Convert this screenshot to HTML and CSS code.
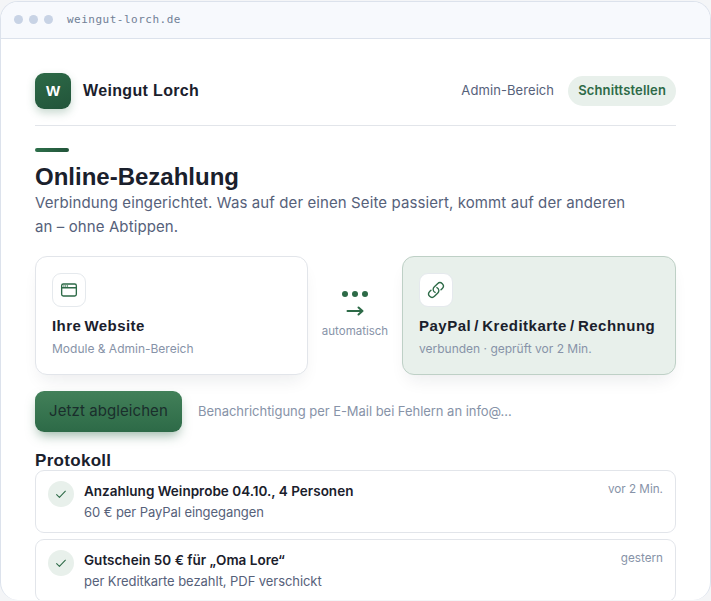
FILE: index.html
```html
<!DOCTYPE html>
<html lang="de">
<head>
<meta charset="utf-8">
<title>Weingut Lorch – Schnittstellen</title>
<link rel="stylesheet" href="styles.css">
</head>
<body>
<div class="window">
  <div class="chrome"><i></i><i></i><i></i><span class="url">weingut-lorch.de</span></div>
  <main class="page">
    <header class="top">
      <span class="mark">W</span>
      <span class="brand">Weingut Lorch</span>
      <nav class="nav"><span>Admin-Bereich</span><span class="active">Schnittstellen</span></nav>
    </header>
    <div class="accent"></div>
    <h1>Online-Bezahlung</h1>
    <p class="lead">Verbindung eingerichtet. Was auf der einen Seite passiert, kommt auf der anderen an – ohne Abtippen.</p>
    <section class="bridge">
      <div class="node">
        <span class="icon"><svg width="18" height="18" viewBox="0 0 24 24"><rect x="2.200" y="4" width="19.600" height="16" rx="2.200"/><path d="M2.200 9h19.600M5.200 6.600h.01M7.600 6.600h.01M10 6.600h.01"/></svg></span>
        <strong class="title site">Ihre Website</strong>
        <small>Module &amp; Admin-Bereich</small>
      </div>
      <div class="flow">
        <div class="dots"><i></i><i></i><i></i></div>
        <svg class="arrow" width="18" height="12" viewBox="0 0 18 12"><path d="M1.500 6h15M12.500 2.500l4 3.500-4 3.500"/></svg>
        <span>automatisch</span>
      </div>
      <div class="node linked">
        <span class="icon"><svg width="18" height="18" viewBox="0 0 24 24"><path d="M13.190 8.688a4.500 4.500 0 0 1 1.242 7.244l-4.500 4.500a4.500 4.500 0 0 1-6.364-6.364l1.757-1.757m13.350-.622l1.757-1.757a4.500 4.500 0 0 0-6.364-6.364l-4.500 4.500a4.500 4.500 0 0 0 1.242 7.244"/></svg></span>
        <strong class="title pay">PayPal / Kreditkarte / Rechnung</strong>
        <small>verbunden · geprüft vor 2 Min.</small>
      </div>
    </section>
    <div class="actions"><button>Jetzt abgleichen</button><span class="hint">Benachrichtigung per E-Mail bei Fehlern an info@…</span></div>
    <h2>Protokoll</h2>
    <ul class="log">
      <li><span class="check"><svg width="14" height="14" viewBox="0 0 24 24"><path d="M4.500 13l4.800 4.800L19.500 7.200"/></svg></span><div class="entry"><b>Anzahlung Weinprobe 04.10., 4 Personen</b><span>60 € per PayPal eingegangen</span></div><time>vor 2 Min.</time></li>
      <li><span class="check"><svg width="14" height="14" viewBox="0 0 24 24"><path d="M4.500 13l4.800 4.800L19.500 7.200"/></svg></span><div class="entry"><b>Gutschein 50 € für „Oma Lore“</b><span>per Kreditkarte bezahlt, PDF verschickt</span></div><time>gestern</time></li>
    </ul>
  </main>
</div>
</body>
</html>
```
FILE: styles.css
```css
* { box-sizing: border-box; }
body { margin: 0; height: 601px; overflow: hidden; background: #f4f5f7; font-family: Inter, sans-serif; color: #1a202c; }
.window { height: 599px; margin-top: 1px; overflow: hidden; border: 1px solid #dce2ec; border-bottom: 0; border-radius: 18px; background: #fff; }
.chrome { height: 37px; padding: 0 13px 1px; display: flex; align-items: center; gap: 6px; background: #f7f9fd; border-bottom: 1px solid #dce2ec; }
.chrome i { width: 9px; height: 9px; border-radius: 50%; background: #c8d3e5; }
.url { margin-left: 8px; padding-top: 1px; font: 11px/16px "DejaVu Sans Mono", monospace; letter-spacing: .5px; color: #718096; }
.page { padding: 34px 34px 0; }
.top { height: 53px; padding-bottom: 16px; border-bottom: 1px solid #e2e5ea; display: flex; align-items: center; }
.mark { width: 36px; height: 36px; border-radius: 9px; background: linear-gradient(160deg, #2d6a47, #22543a); box-shadow: 0 4px 8px #2d6a4740; color: #fff; display: grid; place-items: center; font: bold 15px/1 "Liberation Sans", sans-serif; padding-bottom: 1px; }
.brand { margin-left: 12px; font: bold 16px/20px "Liberation Sans", sans-serif; letter-spacing: .35px; }
.nav { margin-left: auto; display: flex; align-items: center; gap: 4px; font-size: 13px; line-height: 20px; color: #56617a; }
.nav span { padding: 4px 10px 6px; border-radius: 15px; letter-spacing: .08px; }
.nav .active { background: #e8f0eb; color: #2d6a47; font-weight: 600; letter-spacing: .15px; }
.accent { margin-top: 22px; width: 34px; height: 4px; border-radius: 2px; background: linear-gradient(90deg, #2d6f4a, #22543a); }
h1 { margin: 11px 0 0; font: bold 24px/28px "Liberation Sans", sans-serif; }
.lead { max-width: 605px; margin: 0; font-size: 15px; line-height: 24px; letter-spacing: .1px; color: #56617a; }
.bridge { margin-top: 17px; height: 119px; display: grid; grid-template-columns: 273px 1fr 274px; }
.node { border: 1px solid #e2e5ea; border-radius: 12px; padding: 16px; display: flex; flex-direction: column; background: #fff; box-shadow: 0 10px 18px -6px #1a202c17; white-space: nowrap; }
.linked { background: #e8f0eb; border-color: #bed0c6; }
.icon { width: 34px; height: 34px; border: 1px solid #e5e9ed; border-radius: 9px; display: grid; place-items: center; background: #fff; }
svg { display: block; fill: none; stroke: #2d6a47; stroke-width: 1.8; stroke-linecap: round; stroke-linejoin: round; }
.title { margin-top: 9px; font: bold 15px/20px "Liberation Sans", sans-serif; }
.site { letter-spacing: .45px; word-spacing: -1.500px; }
.pay { letter-spacing: .5px; word-spacing: -1.500px; }
small { margin-top: 4px; font-size: 12px; line-height: 18px; color: #8793a8; }
.flow { display: flex; flex-direction: column; align-items: center; padding-top: 35px; font-size: 11.500px; line-height: 16px; color: #8793a8; }
.dots { display: flex; gap: 4px; }
.dots i { width: 6px; height: 6px; border-radius: 50%; background: #2d6a47; }
.arrow { margin: 8px 0 6px; stroke-width: 2; }
.actions { margin-top: 16px; display: flex; align-items: center; gap: 16px; }
button { width: 147px; height: 41px; padding: 0 0 2px; border: 0; border-radius: 9px; background: linear-gradient(#428059, #2d6a47); box-shadow: 0 6px 12px -3px #2d6a4780; color: #1a2e2c; font: 15px/24px Inter, sans-serif; letter-spacing: .08px; }
.hint { font-size: 13px; letter-spacing: -.04px; padding-bottom: 1px; color: #8793a8; }
h2 { margin: 19px 0 -1px; font: bold 17px/20px "Liberation Sans", sans-serif; letter-spacing: .3px; }
.log { list-style: none; margin: 0; padding: 0; display: grid; gap: 6px; }
.log li { height: 63px; padding: 10px 12px; border: 1px solid #e2e5ea; border-radius: 9px; display: flex; gap: 10px; }
.check { width: 26px; height: 26px; border-radius: 50%; background: #e8f0eb; display: grid; place-items: center; }
.entry { flex: 1; font-size: 13px; letter-spacing: -.07px; line-height: 21px; color: #56617a; }
.entry b, .entry span { display: block; }
.entry b { font-size: 13.500px; font-weight: 600; letter-spacing: .01px; color: #1a202c; }
time { font-size: 11.700px; line-height: 16px; color: #8793a8; }
```
